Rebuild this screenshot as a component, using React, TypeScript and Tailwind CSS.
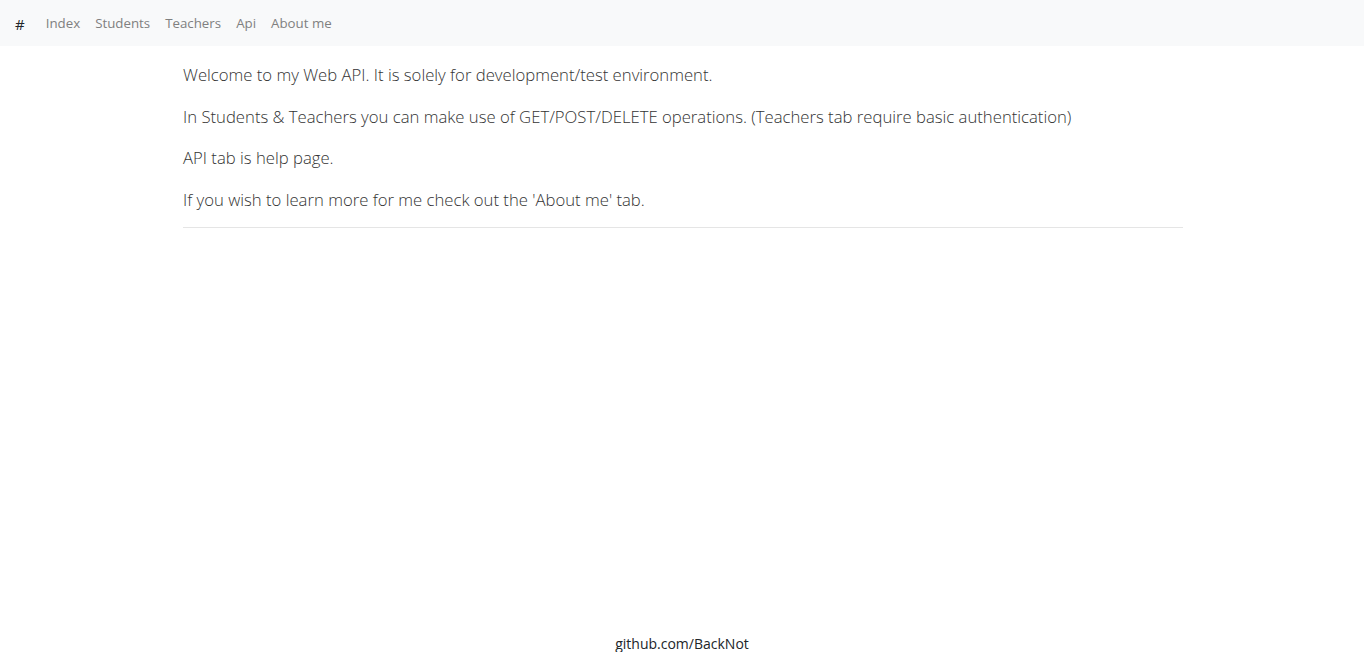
import React from "react";

const links = ["Index", "Students", "Teachers", "Api", "About me"];

const lines = [
  "Welcome to my Web API. It is solely for development/test environment.",
  "In Students & Teachers you can make use of GET/POST/DELETE operations. (Teachers tab require basic authentication)",
  "API tab is help page.",
  "If you wish to learn more for me check out the 'About me' tab.",
];

const App = () => {
  return (
    <div
      className="min-h-screen w-full flex flex-col bg-white"
      style={{ fontFamily: '"Open Sans", "Noto Sans", sans-serif' }}
    >
      <nav className="h-[46px] w-full bg-[#f8f9fa] flex items-center pl-[15px] pt-[2px]">
        <span className="text-[15px] text-[#212529] mr-[21px]">#</span>
        <div className="flex gap-[15px] text-[13.3px] text-[#808080]">
          {links.map((l) => (
            <a key={l} href="#">
              {l}
            </a>
          ))}
        </div>
      </nav>
      <main className="w-[1000px] ml-[183px] pt-[15px] flex-1">
        {lines.map((t) => (
          <p
            key={t}
            className="text-[16.7px] font-light leading-[27px] mb-[14.5px] text-[#333]"
          >
            {t}
          </p>
        ))}
        <hr className="border-t border-[#e5e5e5] mt-[1px]" />
      </main>
      <footer className="h-[16px] leading-[16px] flex justify-center text-[14px] text-[#212529]">
        github.com/BackNot
      </footer>
    </div>
  );
};

export default App;
